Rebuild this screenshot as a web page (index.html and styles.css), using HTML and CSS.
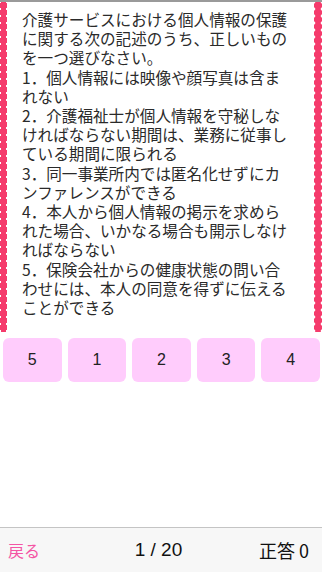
FILE: index.html
```html
<!DOCTYPE html>
<html lang="ja">

<head>
    <meta charset="UTF-8">
    <meta name="viewport" content="width=device-width, initial-scale=1.0">
    <title>問題</title>
    <link rel="stylesheet" href="styles.css">
</head>

<body>
    <div class="page">
        <!-- 問題文 -->
        <div class="question">
            <p class="text">介護サービスにおける個人情報の保護に関する次の記述のうち、正しいものを一つ選びなさい。
1．個人情報には映像や顔写真は含まれない
2．介護福祉士が個人情報を守秘しなければならない期間は、業務に従事している期間に限られる
3．同一事業所内では匿名化せずにカンファレンスができる
4．本人から個人情報の掲示を求められた場合、いかなる場合も開示しなければならない
5．保険会社からの健康状態の問い合わせには、本人の同意を得ずに伝えることができる</p>
        </div>
        <!-- 解答ボタン -->
        <div class="answers">
            <div class="btn">5</div>
            <div class="btn">1</div>
            <div class="btn">2</div>
            <div class="btn">3</div>
            <div class="btn">4</div>
        </div>
        <!-- 下のバー -->
        <div class="footer">
            <span class="back">戻る</span>
            <span class="count">1 / 20</span>
            <span class="score">正答 0</span>
        </div>
    </div>
</body>

</html>
```

FILE: styles.css
```css
:root {
    --dot-color: #f53b6c;
    --btn-color: #ffccfc;
    --text-color: #2a2a2a;
}

* {
    margin: 0;
    padding: 0;
    box-sizing: border-box;
}

body {
    font-family: "Noto Sans CJK JP", "Liberation Sans", sans-serif;
    color: var(--text-color);
    background: #fff;
}

.page {
    display: flex;
    flex-direction: column;
    height: 572px;
    border-top: 2px solid #9a9a9a;
}

.question {
    height: 330px;
    padding: 8px 26px 0 22px;
    /* 左右のドット */
    background-image:
        radial-gradient(circle at 3.5px 3.5px, var(--dot-color) 3.6px, transparent 4.2px),
        radial-gradient(circle at 4px 3.5px, var(--dot-color) 3.8px, transparent 4.4px);
    background-size: 7px 7px, 8px 7px;
    background-repeat: repeat-y;
    background-position: left top, right top;
}

.text {
    font-size: 15.6px;
    line-height: 19.2px;
    white-space: pre-line;
    width: 272px;
}

.answers {
    display: flex;
    gap: 6px;
    padding: 6px 2px 0 3px;
}

.btn {
    flex: 1;
    height: 44px;
    display: flex;
    align-items: center;
    justify-content: center;
    background: var(--btn-color);
    border-radius: 6px;
    font-family: "Liberation Sans", sans-serif;
    font-size: 16px;
    color: #222;
}

.footer {
    margin-top: auto;
    height: 45px;
    display: flex;
    align-items: center;
    justify-content: space-between;
    padding: 0 13px 0 8px;
    background: #f7f7f7;
    border-top: 1px solid #c4c4c4;
}

.back {
    color: #f455a4;
    font-size: 16px;
    width: 80px;
}

.count {
    font-family: "Liberation Sans", sans-serif;
    font-size: 19px;
    color: #111;
}

.score {
    font-size: 18px;
    color: #111;
    width: 80px;
    text-align: right;
}
```
